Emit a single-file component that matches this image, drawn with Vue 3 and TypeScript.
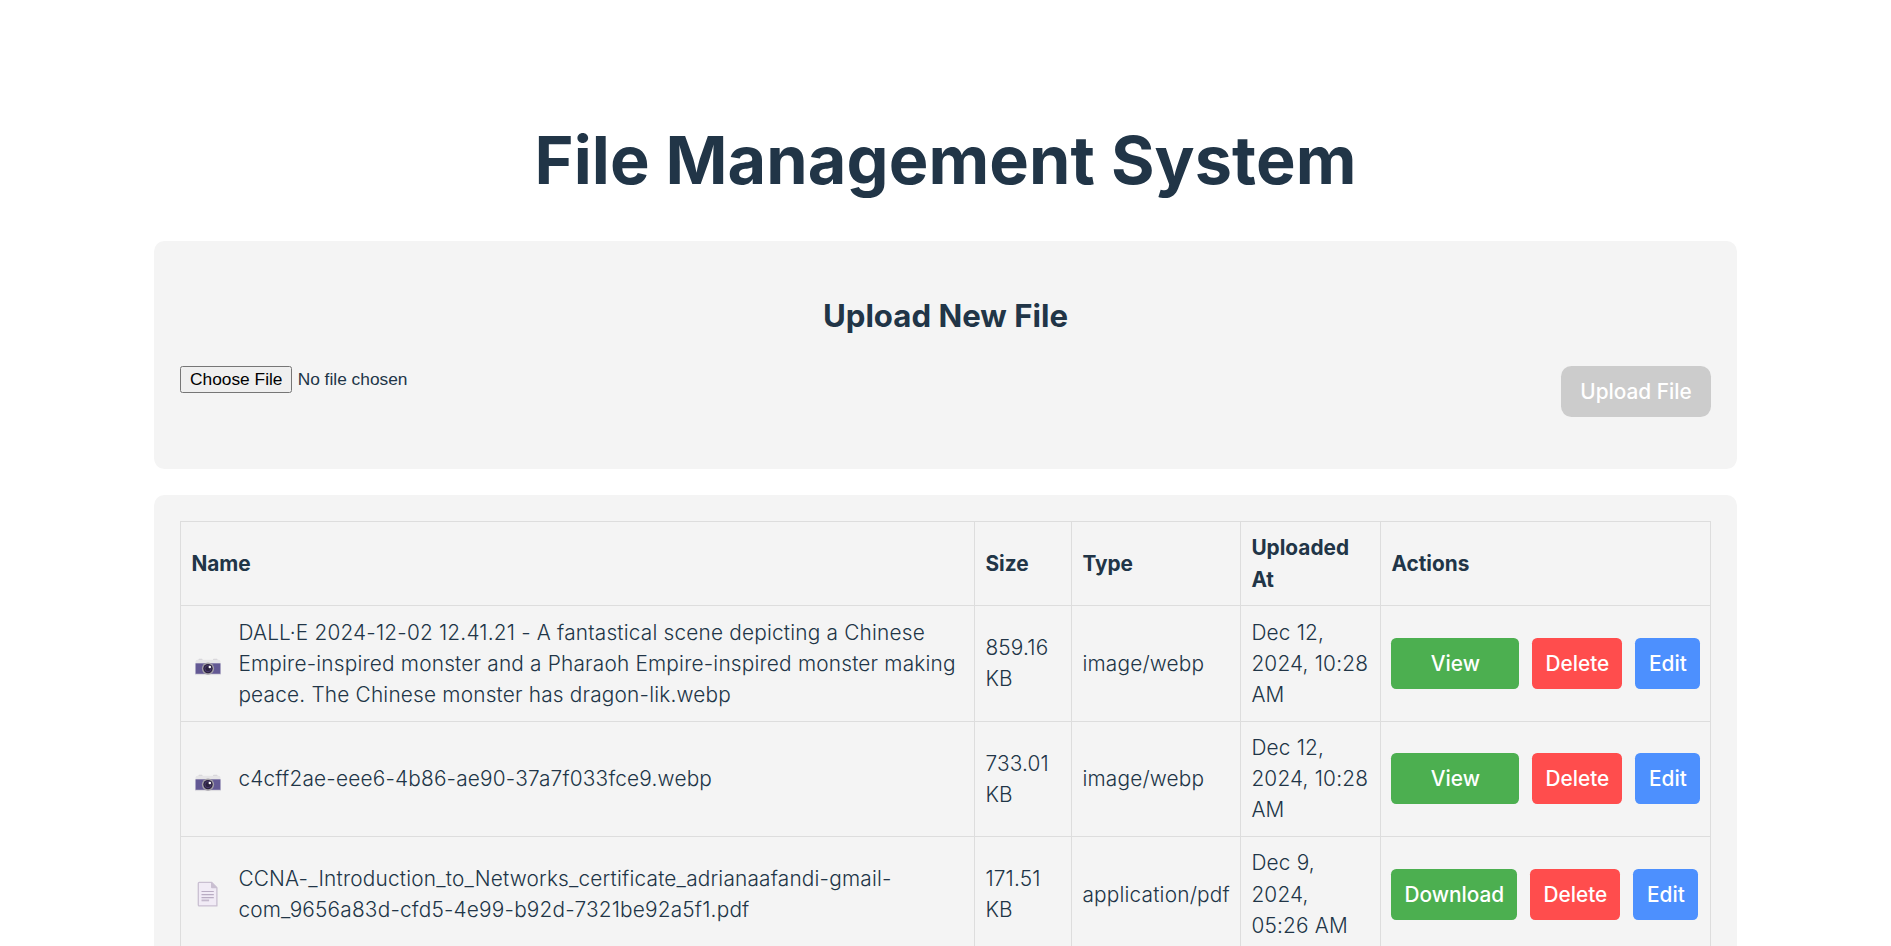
<script setup lang="ts">
interface StoredFile {
  name: string
  size: string
  type: string
  uploadedAt: string
  kind: 'image' | 'document'
}

const files: StoredFile[] = [
  {
    name: 'DALL·E 2024-12-02 12.41.21 - A fantastical scene depicting a Chinese Empire-inspired monster and a Pharaoh Empire-inspired monster making peace. The Chinese monster has dragon-lik.webp',
    size: '859.16 KB',
    type: 'image/webp',
    uploadedAt: 'Dec 12, 2024, 10:28 AM',
    kind: 'image',
  },
  {
    name: 'c4cff2ae-eee6-4b86-ae90-37a7f033fce9.webp',
    size: '733.01 KB',
    type: 'image/webp',
    uploadedAt: 'Dec 12, 2024, 10:28 AM',
    kind: 'image',
  },
  {
    name: 'CCNA-_Introduction_to_Networks_certificate_adrianaafandi-gmail-com_9656a83d-cfd5-4e99-b92d-7321be92a5f1.pdf',
    size: '171.51 KB',
    type: 'application/pdf',
    uploadedAt: 'Dec 9, 2024, 05:26 AM',
    kind: 'document',
  },
]
</script>

<template>
  <main class="page">
    <h1>File Management System</h1>

    <section class="card upload">
      <h2>Upload New File</h2>
      <form class="upload-form" @submit.prevent>
        <input type="file" class="picker" />
        <button type="submit" class="upload-button" disabled>Upload File</button>
      </form>
    </section>

    <section class="card">
      <table>
        <colgroup>
          <col class="col-name" />
          <col class="col-size" />
          <col class="col-type" />
          <col class="col-date" />
          <col class="col-actions" />
        </colgroup>
        <thead>
          <tr>
            <th>Name</th>
            <th>Size</th>
            <th>Type</th>
            <th>Uploaded At</th>
            <th>Actions</th>
          </tr>
        </thead>
        <tbody>
          <tr v-for="file in files" :key="file.name">
            <td>
              <div class="file">
                <svg v-if="file.kind === 'image'" class="file-icon" viewBox="0 -2.8 32 32">
                  <rect x="6.5" y="9" width="4" height="2" rx="0.8" fill="#d5d3d8" />
                  <rect x="21" y="9" width="4.5" height="2" rx="0.8" fill="#d5d3d8" />
                  <path d="M3.5 14v-2a2 2 0 0 1 2-2h21a2 2 0 0 1 2 2v2z" fill="#e6e5e7" />
                  <rect x="3.5" y="13.5" width="25" height="11" fill="#635994" />
                  <rect x="3.5" y="24" width="25" height="1.3" fill="#dedde1" />
                  <circle cx="16" cy="18.8" r="6.1" fill="#a5a1a8" />
                  <circle cx="16" cy="18.8" r="4.7" fill="#2c2340" />
                  <circle cx="16" cy="18.8" r="3.1" fill="none" stroke="#49396c" stroke-width="1" />
                  <circle cx="17.8" cy="17.1" r="1.25" fill="#fff" />
                </svg>
                <svg v-else class="file-icon" viewBox="0 -0.4 32 32">
                  <path d="M7.3 3.9h12.2l5.4 5.5v18.1H7.3a1 1 0 0 1-1-1V4.9a1 1 0 0 1 1-1z" fill="#f1ebf6" stroke="#c9bfd1" stroke-width="1.3" stroke-linejoin="round" />
                  <path d="M19 3.7l6.2 6.2H20a1 1 0 0 1-1-1z" fill="#c9bfd1" />
                  <path d="M9.5 13.1h12.3M9.5 16.2h12.3M9.5 19.2h12.3" stroke="#b9acc3" stroke-width="1.2" />
                  <path d="M9.5 22h7.6" stroke="#c4b9cd" stroke-width="1.8" />
                </svg>
                <span>{{ file.name }}</span>
              </div>
            </td>
            <td>{{ file.size }}</td>
            <td>{{ file.type }}</td>
            <td>{{ file.uploadedAt }}</td>
            <td>
              <div class="actions">
                <button v-if="file.kind === 'image'" class="action view">View</button>
                <button v-else class="action download">Download</button>
                <button class="action delete">Delete</button>
                <button class="action edit">Edit</button>
              </div>
            </td>
          </tr>
        </tbody>
      </table>
    </section>
  </main>
</template>

<style>
body {
  height: 100vh;
  overflow: hidden;
  background: #fff;
}
</style>

<style scoped>
.page {
  display: flow-root;
  width: 1583px;
  height: 100vh;
  overflow: hidden;
  margin: 0 auto;
  padding-top: 79px;
  box-sizing: border-box;
  color: #213547;
  font-family: Inter, 'Liberation Sans', sans-serif;
  font-size: 20.8px;
  font-weight: 400;
  line-height: 31.2px;
}

h1 {
  margin: 0 0 44.6px;
  padding-top: 44.6px;
  font-size: 66.56px;
  font-weight: 700;
  line-height: 1.1;
  letter-spacing: 0.1px;
  text-align: center;
}

.card {
  display: flow-root;
  margin-bottom: 26px;
  padding: 26px;
  border-radius: 10.4px;
  background: #f4f4f4;
}

h2 {
  margin: 25.9px 0;
  font-size: 31.2px;
  font-weight: 700;
  line-height: 46.8px;
  text-align: center;
}

.upload-form {
  display: flex;
  justify-content: space-between;
  align-items: flex-start;
  margin-bottom: 26px;
}

.picker {
  width: 420px;
  color: #213547;
  font: 400 17.333px 'Liberation Sans', Arial, sans-serif;
}

.picker::file-selector-button {
  height: 27px;
  margin-inline-end: 5.2px;
  padding: 1px 8px;
  font: inherit;
}

button {
  border: 0;
  color: #fff;
  font-family: inherit;
  font-size: 20.8px;
  font-weight: 500;
  line-height: 25px;
}

.upload-button {
  width: 150px;
  padding: 13px 0;
  border-radius: 10.4px;
  background: #ccc;
}

table {
  width: 1531px;
  border-collapse: collapse;
  table-layout: fixed;
}

.col-name { width: 794px; }
.col-size { width: 97px; }
.col-type { width: 169px; }
.col-date { width: 140px; }

th,
td {
  padding: 10.4px;
  border: 1px solid #ddd;
  text-align: left;
  vertical-align: middle;
}

th {
  font-weight: 700;
}

td {
  font-weight: 300;
  letter-spacing: 0.2px;
}

.file {
  display: flex;
  align-items: center;
}

.file-icon {
  flex: none;
  width: 32px;
  height: 32px;
  margin: 0 14px 0 1px;
}

.actions {
  display: flex;
  gap: 13px;
}

.action {
  flex: none;
  padding: 13px 0;
  border-radius: 5.2px;
}

.view { width: 128px; background: #4caf50; }
.download { width: 126px; background: #4caf50; }
.delete { width: 90px; background: #ff4d4d; }
.edit { width: 65px; background: #4d90fe; }
</style>
